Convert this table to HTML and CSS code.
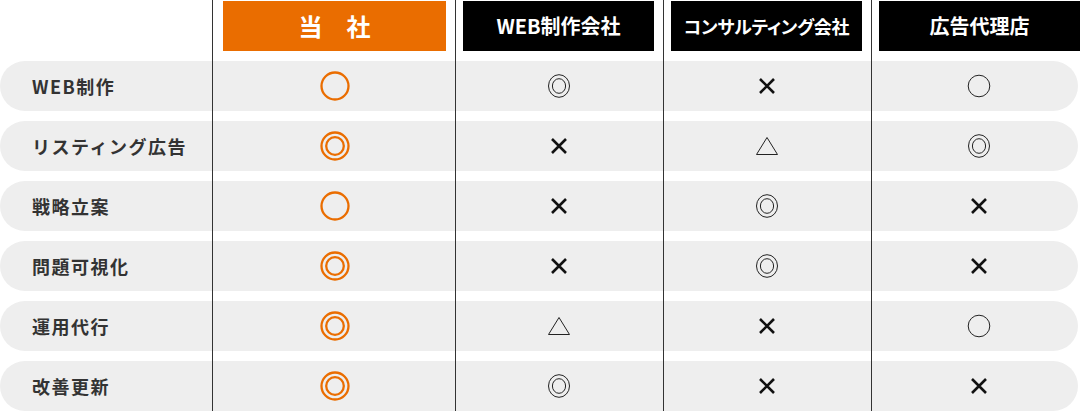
FILE: index.html
```html
<!DOCTYPE html>
<html lang="ja">
<head>
<meta charset="utf-8">
<link rel="stylesheet" href="styles.css">
</head>
<body>
<div class="cmp">
  <div class="row head">
    <div class="cell label"></div>
    <div class="cell col ours"><div class="hbox">当　社</div></div>
    <div class="cell col"><div class="hbox">WEB制作会社</div></div>
    <div class="cell col"><div class="hbox tight">コンサルティング会社</div></div>
    <div class="cell col last"><div class="hbox">広告代理店</div></div>
  </div>

  <div class="row">
    <div class="cell label"><div class="fill">WEB制作</div></div>
    <div class="cell col ours"><div class="fill"><svg class="o-mark" width="32" height="32" viewBox="0 0 32 32"><circle cx="16" cy="16" r="13.5"/></svg></div></div>
    <div class="cell col"><div class="fill"><svg class="k-mark" width="26" height="26" viewBox="0 0 26 26"><ellipse cx="13" cy="13" rx="10.5" ry="11.3"/><ellipse cx="13" cy="13" rx="6.6" ry="7.3"/></svg></div></div>
    <div class="cell col"><div class="fill"><svg class="x-mark" width="18" height="18" viewBox="0 0 18 18"><path d="M2 2L16 16M16 2L2 16"/></svg></div></div>
    <div class="cell col last"><div class="fill"><svg class="k-mark" width="26" height="26" viewBox="0 0 26 26"><circle cx="13" cy="13" r="10.8"/></svg></div></div>
  </div>

  <div class="row">
    <div class="cell label"><div class="fill">リスティング広告</div></div>
    <div class="cell col ours"><div class="fill"><svg class="o-mark" width="32" height="32" viewBox="0 0 32 32"><circle cx="16" cy="16" r="13.5"/><circle cx="16" cy="16" r="8.8"/></svg></div></div>
    <div class="cell col"><div class="fill"><svg class="x-mark" width="18" height="18" viewBox="0 0 18 18"><path d="M2 2L16 16M16 2L2 16"/></svg></div></div>
    <div class="cell col"><div class="fill"><svg class="k-mark" width="24" height="22" viewBox="0 0 24 22"><path d="M12 2.5L22.5 19.5H1.5Z"/></svg></div></div>
    <div class="cell col last"><div class="fill"><svg class="k-mark" width="26" height="26" viewBox="0 0 26 26"><ellipse cx="13" cy="13" rx="10.5" ry="11.3"/><ellipse cx="13" cy="13" rx="6.6" ry="7.3"/></svg></div></div>
  </div>

  <div class="row">
    <div class="cell label"><div class="fill">戦略立案</div></div>
    <div class="cell col ours"><div class="fill"><svg class="o-mark" width="32" height="32" viewBox="0 0 32 32"><circle cx="16" cy="16" r="13.5"/></svg></div></div>
    <div class="cell col"><div class="fill"><svg class="x-mark" width="18" height="18" viewBox="0 0 18 18"><path d="M2 2L16 16M16 2L2 16"/></svg></div></div>
    <div class="cell col"><div class="fill"><svg class="k-mark" width="26" height="26" viewBox="0 0 26 26"><ellipse cx="13" cy="13" rx="10.5" ry="11.3"/><ellipse cx="13" cy="13" rx="6.6" ry="7.3"/></svg></div></div>
    <div class="cell col last"><div class="fill"><svg class="x-mark" width="18" height="18" viewBox="0 0 18 18"><path d="M2 2L16 16M16 2L2 16"/></svg></div></div>
  </div>

  <div class="row">
    <div class="cell label"><div class="fill">問題可視化</div></div>
    <div class="cell col ours"><div class="fill"><svg class="o-mark" width="32" height="32" viewBox="0 0 32 32"><circle cx="16" cy="16" r="13.5"/><circle cx="16" cy="16" r="8.8"/></svg></div></div>
    <div class="cell col"><div class="fill"><svg class="x-mark" width="18" height="18" viewBox="0 0 18 18"><path d="M2 2L16 16M16 2L2 16"/></svg></div></div>
    <div class="cell col"><div class="fill"><svg class="k-mark" width="26" height="26" viewBox="0 0 26 26"><ellipse cx="13" cy="13" rx="10.5" ry="11.3"/><ellipse cx="13" cy="13" rx="6.6" ry="7.3"/></svg></div></div>
    <div class="cell col last"><div class="fill"><svg class="x-mark" width="18" height="18" viewBox="0 0 18 18"><path d="M2 2L16 16M16 2L2 16"/></svg></div></div>
  </div>

  <div class="row">
    <div class="cell label"><div class="fill">運用代行</div></div>
    <div class="cell col ours"><div class="fill"><svg class="o-mark" width="32" height="32" viewBox="0 0 32 32"><circle cx="16" cy="16" r="13.5"/><circle cx="16" cy="16" r="8.8"/></svg></div></div>
    <div class="cell col"><div class="fill"><svg class="k-mark" width="24" height="22" viewBox="0 0 24 22"><path d="M12 2.5L22.5 19.5H1.5Z"/></svg></div></div>
    <div class="cell col"><div class="fill"><svg class="x-mark" width="18" height="18" viewBox="0 0 18 18"><path d="M2 2L16 16M16 2L2 16"/></svg></div></div>
    <div class="cell col last"><div class="fill"><svg class="k-mark" width="26" height="26" viewBox="0 0 26 26"><circle cx="13" cy="13" r="10.8"/></svg></div></div>
  </div>

  <div class="row">
    <div class="cell label"><div class="fill">改善更新</div></div>
    <div class="cell col ours"><div class="fill"><svg class="o-mark" width="32" height="32" viewBox="0 0 32 32"><circle cx="16" cy="16" r="13.5"/><circle cx="16" cy="16" r="8.8"/></svg></div></div>
    <div class="cell col"><div class="fill"><svg class="k-mark" width="26" height="26" viewBox="0 0 26 26"><ellipse cx="13" cy="13" rx="10.5" ry="11.3"/><ellipse cx="13" cy="13" rx="6.6" ry="7.3"/></svg></div></div>
    <div class="cell col"><div class="fill"><svg class="x-mark" width="18" height="18" viewBox="0 0 18 18"><path d="M2 2L16 16M16 2L2 16"/></svg></div></div>
    <div class="cell col last"><div class="fill"><svg class="x-mark" width="18" height="18" viewBox="0 0 18 18"><path d="M2 2L16 16M16 2L2 16"/></svg></div></div>
  </div>
</div>
</body>
</html>
```

FILE: styles.css
```css
html, body {
  margin: 0;
  padding: 0;
  background: #fff;
}
body {
  font-family: "Noto Sans CJK JP", "Noto Sans", sans-serif;
  color: #333;
}
.cmp {
  width: 1080px;
}
.row {
  display: grid;
  grid-template-columns: 212px 243px 208px 208px 209px;
}
.cell {
  padding-bottom: 10px;
}
.row:last-child .cell {
  padding-bottom: 0;
}
.col {
  border-left: 1px solid #333;
}
.hbox {
  margin: 1px 9px 0 7px;
  height: 50px;
  background: #000;
  color: #fff;
  font-size: 20px;
  font-weight: 700;
  display: flex;
  align-items: center;
  justify-content: center;
  line-height: 1;
  white-space: nowrap;
}
.hbox.tight {
  font-feature-settings: "palt";
  font-size: 18px;
  letter-spacing: -0.3px;
}
.ours .hbox {
  margin-left: 10px;
  background: #ea6d00;
  font-size: 24px;
}
.last .hbox {
  margin-right: 0;
}
.fill {
  height: 50px;
  background: #eee;
  display: flex;
  align-items: center;
  justify-content: center;
  padding: 0 9px 0 7px;
}
.ours .fill {
  padding-left: 10px;
}
.last .fill {
  padding-right: 0;
  margin-right: 2px;
  border-radius: 0 25px 25px 0;
}
.label .fill {
  justify-content: flex-start;
  padding: 0 0 0 32px;
  border-radius: 25px 0 0 25px;
  font-size: 18px;
  font-weight: 700;
  letter-spacing: 1.5px;
  color: #333;
}
.o-mark {
  fill: none;
  stroke: #ea6d00;
  stroke-width: 2.3;
}
.k-mark {
  fill: none;
  stroke: #222;
  stroke-width: 1;
}
.x-mark {
  fill: none;
  stroke: #111;
  stroke-width: 2.6;
}
```
